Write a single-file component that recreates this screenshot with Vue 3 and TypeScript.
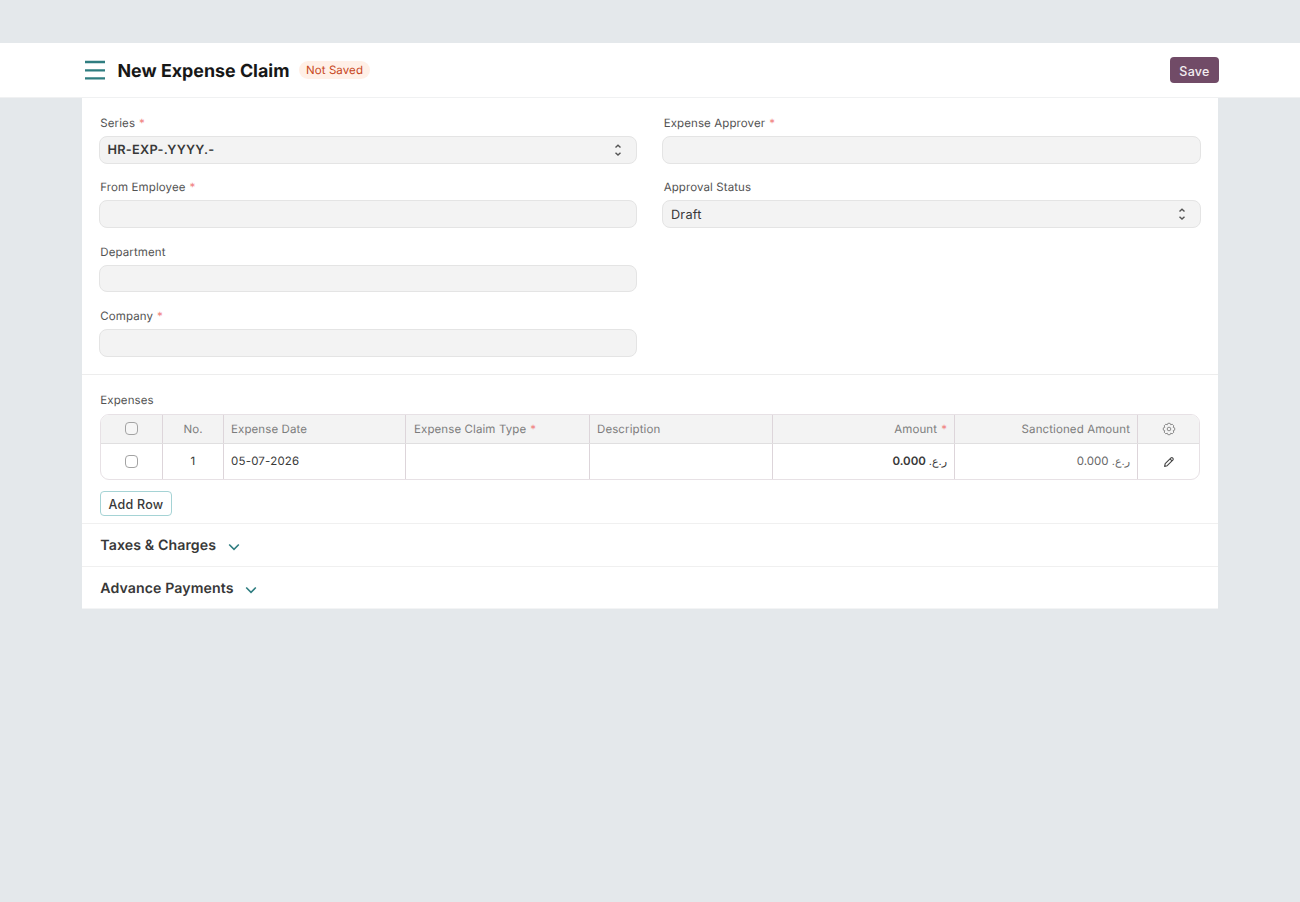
<script setup lang="ts">
interface Field {
  label: string
  required?: boolean
  value?: string
  select?: boolean
  bold?: boolean
}

const columns: Field[][] = [
  [
    { label: 'Series', required: true, value: 'HR-EXP-.YYYY.-', select: true, bold: true },
    { label: 'From Employee', required: true },
    { label: 'Department' },
    { label: 'Company', required: true },
  ],
  [
    { label: 'Expense Approver', required: true },
    { label: 'Approval Status', value: 'Draft', select: true },
  ],
]

const sections = ['Taxes & Charges', 'Advance Payments']
const currency = 'ر.ع.'
const zero = ' 0.000'
</script>

<template>
  <div class="page">
    <header class="head">
      <svg class="menu" width="20" height="20" viewBox="0 0 20 20">
        <path d="M0 2H20M0 10.3H20M0 18.4H20" stroke="#2f7d80" stroke-width="2.3" />
      </svg>
      <h1 class="title">New Expense Claim</h1>
      <span class="pill">Not Saved</span>
      <button class="save">Save</button>
    </header>

    <main class="card">
      <section class="fields">
        <div v-for="(col, i) in columns" :key="i" class="col">
          <div v-for="f in col" :key="f.label" class="field">
            <label class="label">{{ f.label }}<span v-if="f.required" class="req">*</span></label>
            <div class="input" :class="{ bold: f.bold }">
              <span class="value">{{ f.value }}</span>
              <svg v-if="f.select" class="updown" width="8" height="14" viewBox="0 0 8 14">
                <path d="M1.5 4.6L4 2.3L6.5 4.6M1.5 9.8L4 12.1L6.5 9.8" fill="none" stroke="#555" stroke-width="1.4" />
              </svg>
            </div>
          </div>
        </div>
      </section>

      <section class="expenses">
        <div class="label">Expenses</div>
        <div class="table">
          <div class="row header">
            <div class="cell mid"><i class="check"></i></div>
            <div class="cell mid">No.</div>
            <div class="cell">Expense Date</div>
            <div class="cell type">Expense Claim Type<span class="req">*</span></div>
            <div class="cell">Description</div>
            <div class="cell end">Amount<span class="req">*</span></div>
            <div class="cell end">Sanctioned Amount</div>
            <div class="cell mid">
              <svg width="14" height="14" viewBox="0 0 14 14" fill="none" stroke="#8c8c8c" stroke-width="1" stroke-linejoin="round">
                <path d="M5.9 1.3H8.1L8.7 2.8L10.2 2.2L11.8 3.8L11.2 5.3L12.7 5.9V8.1L11.2 8.7L11.8 10.2L10.2 11.8L8.7 11.2L8.1 12.7H5.9L5.3 11.2L3.8 11.8L2.2 10.2L2.8 8.7L1.3 8.1V5.9L2.8 5.3L2.2 3.8L3.8 2.2L5.3 2.8Z" />
                <circle cx="7" cy="7" r="1.8" />
              </svg>
            </div>
          </div>
          <div class="row body">
            <div class="cell mid"><i class="check"></i></div>
            <div class="cell mid">1</div>
            <div class="cell date">05-07-2026</div>
            <div class="cell"></div>
            <div class="cell"></div>
            <div class="cell end strong"><span><span class="rial">{{ currency }}</span>{{ zero }}</span></div>
            <div class="cell end soft"><span><span class="rial">{{ currency }}</span>{{ zero }}</span></div>
            <div class="cell mid">
              <svg class="pencil" width="12" height="12" viewBox="0 0 12 12" fill="none" stroke="#444" stroke-width="1.1" stroke-linejoin="round">
                <path d="M1.6 10.4L2.2 7.7L8 1.9Q8.9 1.2 9.8 2.1Q10.7 3 10 3.9L4.2 9.7ZM7 2.9L9 4.9" />
              </svg>
            </div>
          </div>
        </div>
        <button class="add">Add Row</button>
      </section>

      <section v-for="s in sections" :key="s" class="fold">
        <h2>{{ s }}</h2>
        <svg width="12" height="8" viewBox="0 0 12 8">
          <path d="M1.2 1.5L6 6.3L10.8 1.5" fill="none" stroke="#2f7d80" stroke-width="1.6" />
        </svg>
      </section>
    </main>
  </div>
</template>

<style>
body {
  background: #e4e8eb;
}
</style>

<style scoped>
.page {
  box-sizing: border-box;
  min-height: 902px;
  padding-top: 43px;
  background: #e4e8eb;
  font-family: Inter, 'DejaVu Sans', sans-serif;
  font-size: 11.5px;
  letter-spacing: 0.1px;
  color: #383838;
  text-rendering: geometricPrecision;
}
.page * {
  box-sizing: border-box;
}
.head {
  display: flex;
  align-items: center;
  height: 55px;
  padding: 0 81px 0 85px;
  background: #fff;
  border-bottom: 1px solid #f0f1f2;
}
.title {
  margin: 3px 0 0 12.5px;
  font-size: 17.85px;
  font-weight: 700;
  letter-spacing: 0;
  line-height: 24px;
  color: #171717;
  white-space: nowrap;
}
.pill {
  margin-left: 10px;
  padding: 0 7px 0 6.5px;
  height: 18px;
  line-height: 18px;
  border-radius: 9px;
  background: #fff0e7;
  color: #c7461b;
  white-space: nowrap;
}
.save {
  margin-left: auto;
  width: 49px;
  height: 26px;
  padding: 2px 0 0;
  border: 0;
  border-radius: 4px;
  background: #714b67;
  color: #f3edf1;
  font: 500 12.5px Inter, sans-serif;
  letter-spacing: 0.25px;
}
.card {
  width: 1136px;
  height: 511px;
  margin: 0 auto;
  background: #fff;
  border-bottom: 1px solid #f3f4f5;
}
.fields {
  display: flex;
  gap: 25px;
  height: 277px;
  padding: 15px 17px 0;
  border-bottom: 1px solid #ededed;
}
.col {
  width: 538.4px;
}
.field {
  height: 64.4px;
}
.label {
  display: block;
  height: 23px;
  padding: 1px 0 0 1.3px;
  line-height: 19px;
  color: #525252;
}
.req {
  margin-left: 4px;
  color: #f08080;
}
.input {
  display: flex;
  align-items: center;
  justify-content: space-between;
  height: 27.5px;
  padding: 0 14px 0 7.5px;
  border: 1px solid #e4e4e4;
  border-radius: 8px;
  background: #f3f3f3;
  font-size: 12.75px;
  letter-spacing: 0.25px;
}
.value {
  padding-top: 2px;
}
.bold {
  font-weight: 600;
}
.expenses {
  height: 149px;
  padding: 15px 18px 0;
  border-bottom: 1px solid #f0f0f0;
}
.expenses .label {
  height: 24px;
  padding-left: 0.3px;
}
.table {
  width: 1100px;
  height: 66px;
  border: 1px solid #e7e1e5;
  border-radius: 9px;
  overflow: hidden;
}
.row {
  display: grid;
  grid-template-columns: 62px 61px 182px 184px 183px 182px 183px 61px;
}
.header {
  height: 29px;
  background: #f3f3f3;
  border-bottom: 1px solid #e0dfe0;
  color: #7c7c7c;
}
.body {
  height: 35px;
}
.body .cell {
  padding-bottom: 1px;
}
.cell {
  display: flex;
  align-items: center;
  padding: 0 7px;
  border-right: 1px solid #ddd5da;
  white-space: nowrap;
}
.cell:last-child {
  border-right: 0;
}
.type {
  padding-left: 8px;
}
.date {
  letter-spacing: 0.2px;
}
.mid {
  justify-content: center;
}
.end {
  justify-content: flex-end;
}
.strong {
  font-weight: 600;
}
.soft {
  color: #666;
}
.rial {
  font-size: 11px;
  font-weight: 400;
}
.check {
  width: 13px;
  height: 13px;
  margin: 0 1px 0 0;
  border: 1px solid #a3a3a3;
  border-radius: 4px;
  background: #fff;
}
.header .check {
  margin-bottom: 1px;
  background: #f6f6f6;
}
.pencil {
  margin-top: 1px;
}
.add {
  display: block;
  width: 72px;
  height: 25px;
  margin-top: 11px;
  padding: 1px 0 0;
  border: 1px solid #a5d3d5;
  border-radius: 4px;
  background: #fff;
  color: #383838;
  font: 500 12.5px Inter, sans-serif;
  letter-spacing: 0.25px;
}
.fold {
  display: flex;
  align-items: center;
  height: 42px;
  padding-left: 18.3px;
}
.fold + .fold {
  height: 43px;
  border-top: 1px solid #f0f0f0;
}
.fold h2 {
  margin: 0 11.5px 0 0;
  font-size: 14.15px;
  font-weight: 600;
  letter-spacing: 0.1px;
  color: #383838;
}
.fold svg {
  margin-top: 3px;
}
</style>
